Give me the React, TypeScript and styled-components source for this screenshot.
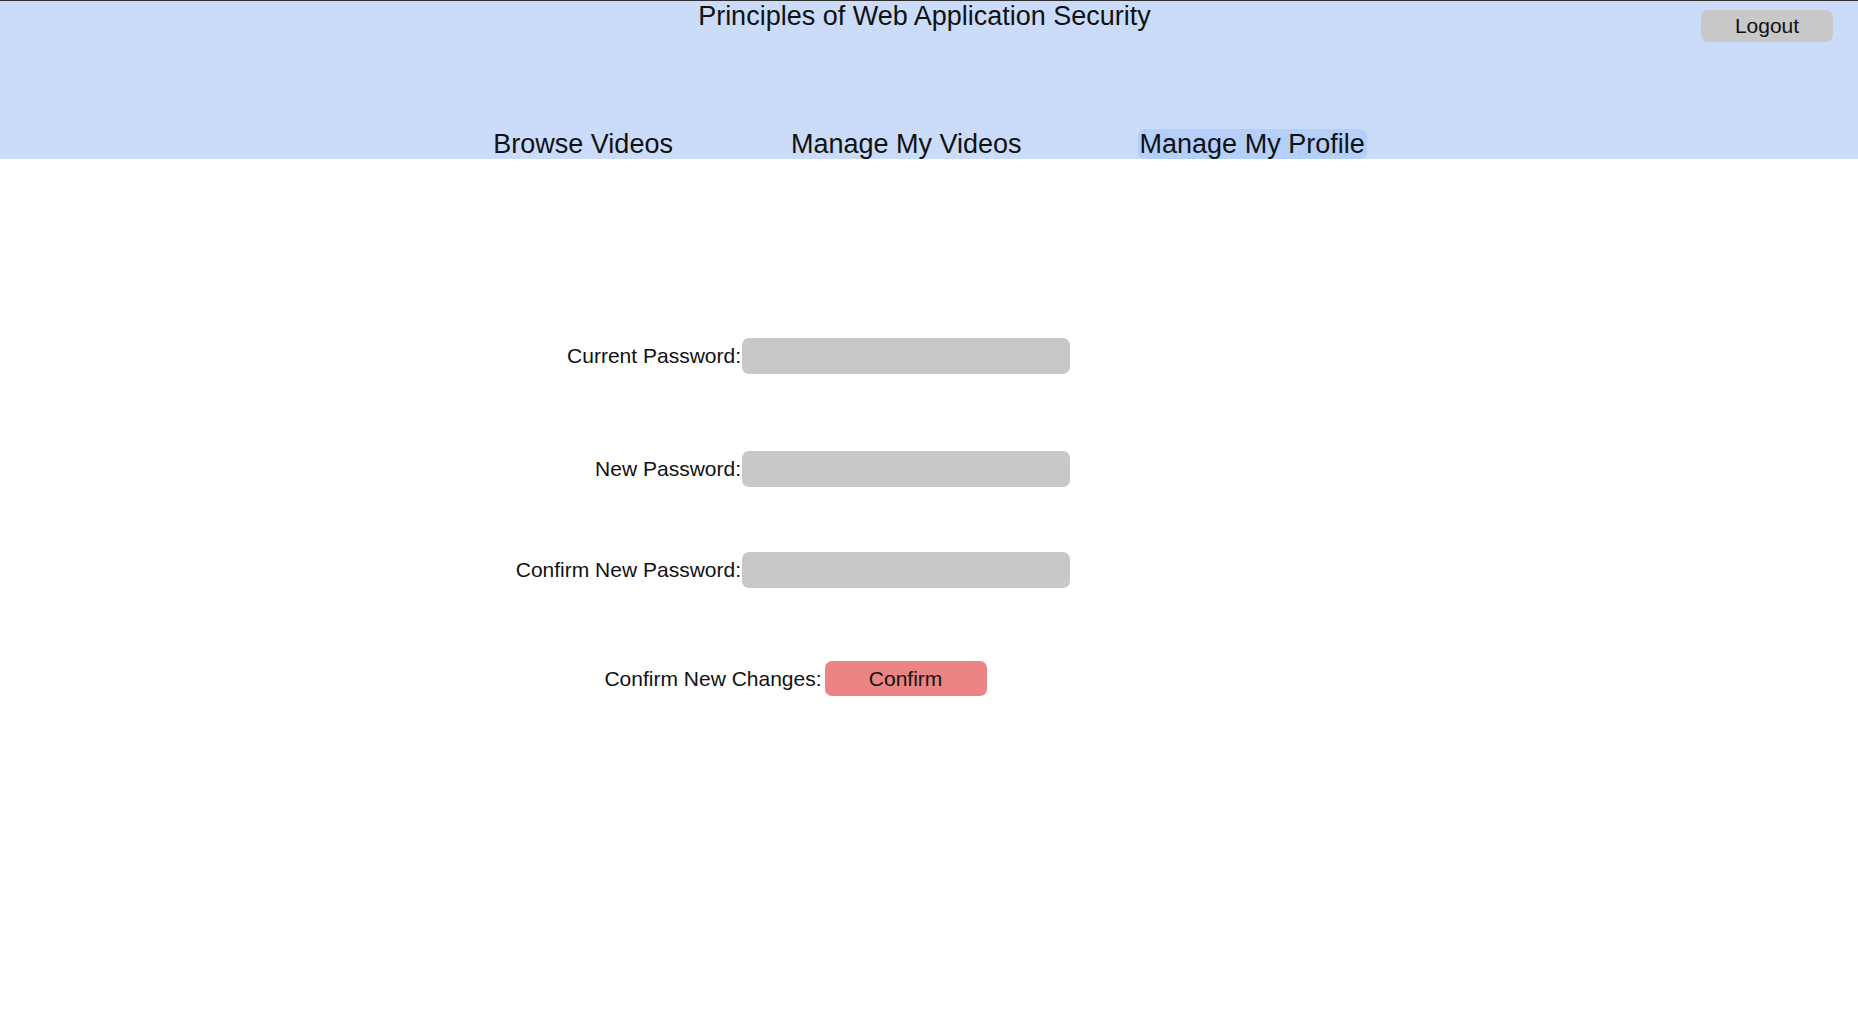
import styled, { createGlobalStyle } from "styled-components";

const GlobalStyle = createGlobalStyle`
  html, body {
    margin: 0;
    padding: 0;
    background: #ffffff;
    font-family: "Liberation Sans", Arial, sans-serif;
    color: #111111;
  }
`;

const navItems = ["Browse Videos", "Manage My Videos", "Manage My Profile"];

const fields = [
  { label: "Current Password:", top: 179 },
  { label: "New Password:", top: 77 },
  { label: "Confirm New Password:", top: 65 },
];

const App = () => {
  return (
    <>
      <GlobalStyle />
      <Header>
        <Title>Principles of Web Application Security</Title>
        <LogoutButton type="button">Logout</LogoutButton>
        <Nav>
          {navItems.map((item) => (
            <NavLink key={item} $active={item === "Manage My Profile"}>
              {item}
            </NavLink>
          ))}
        </Nav>
      </Header>
      <Form onSubmit={(e) => e.preventDefault()}>
        {fields.map((f) => (
          <FieldRow key={f.label} $top={f.top}>
            <Label>{f.label}</Label>
            <Input type="password" />
          </FieldRow>
        ))}
        <ActionRow>
          <Label>Confirm New Changes:</Label>
          <ConfirmButton type="submit">Confirm</ConfirmButton>
        </ActionRow>
      </Form>
    </>
  );
};

export default App;

const Header = styled.header`
  display: grid;
  grid-template-columns: 1fr auto 1fr;
  grid-template-rows: 128px 30px;
  background: #cadcf9;
  border-top: 1px solid #2e2e2e;
  overflow: hidden;
`;

const Title = styled.h1`
  grid-column: 2;
  grid-row: 1;
  align-self: start;
  margin: 0 9px 0 0;
  font-size: 27px;
  font-weight: normal;
  line-height: 31px;
  color: #111111;
`;

const LogoutButton = styled.button`
  grid-column: 3;
  grid-row: 1;
  justify-self: end;
  align-self: start;
  margin: 9px 25px 0 0;
  width: 132px;
  height: 32px;
  border: none;
  border-radius: 7px;
  background: #c8c8c8;
  font-family: "Liberation Sans", Arial, sans-serif;
  font-size: 21px;
  color: #111111;
  padding: 0;
  cursor: pointer;
`;

const Nav = styled.nav`
  grid-column: 1 / -1;
  grid-row: 2;
  display: flex;
  justify-content: center;
  gap: 114px;
`;

const NavLink = styled.a<{ $active?: boolean }>`
  padding: 0 2px;
  font-size: 27px;
  line-height: 31px;
  height: 30px;
  color: #111111;
  border-radius: 6px;
  background: ${(p) => (p.$active ? "#b3cffa" : "transparent")};
  cursor: pointer;
`;

const Form = styled.form`
  display: flex;
  flex-direction: column;
  margin-left: 514px;
  width: 556px;
`;

const FieldRow = styled.div<{ $top: number }>`
  display: grid;
  grid-template-columns: 227px 328px;
  column-gap: 1px;
  align-items: center;
  margin-top: ${(p) => p.$top}px;
`;

const Label = styled.label`
  justify-self: end;
  font-size: 21px;
  color: #111111;
  white-space: nowrap;
`;

const Input = styled.input`
  height: 36px;
  box-sizing: border-box;
  border: none;
  border-radius: 7px;
  background: #c8c8c8;
  outline: none;
  padding: 0 10px;
  font-size: 18px;
`;

const ActionRow = styled.div`
  display: flex;
  align-items: center;
  justify-content: center;
  gap: 3px;
  margin: 73px 0 0 7px;
`;

const ConfirmButton = styled.button`
  width: 162px;
  height: 35px;
  border: none;
  border-radius: 7px;
  background: #ec8484;
  font-family: "Liberation Sans", Arial, sans-serif;
  font-size: 21px;
  color: #111111;
  padding: 0;
  cursor: pointer;
`;
